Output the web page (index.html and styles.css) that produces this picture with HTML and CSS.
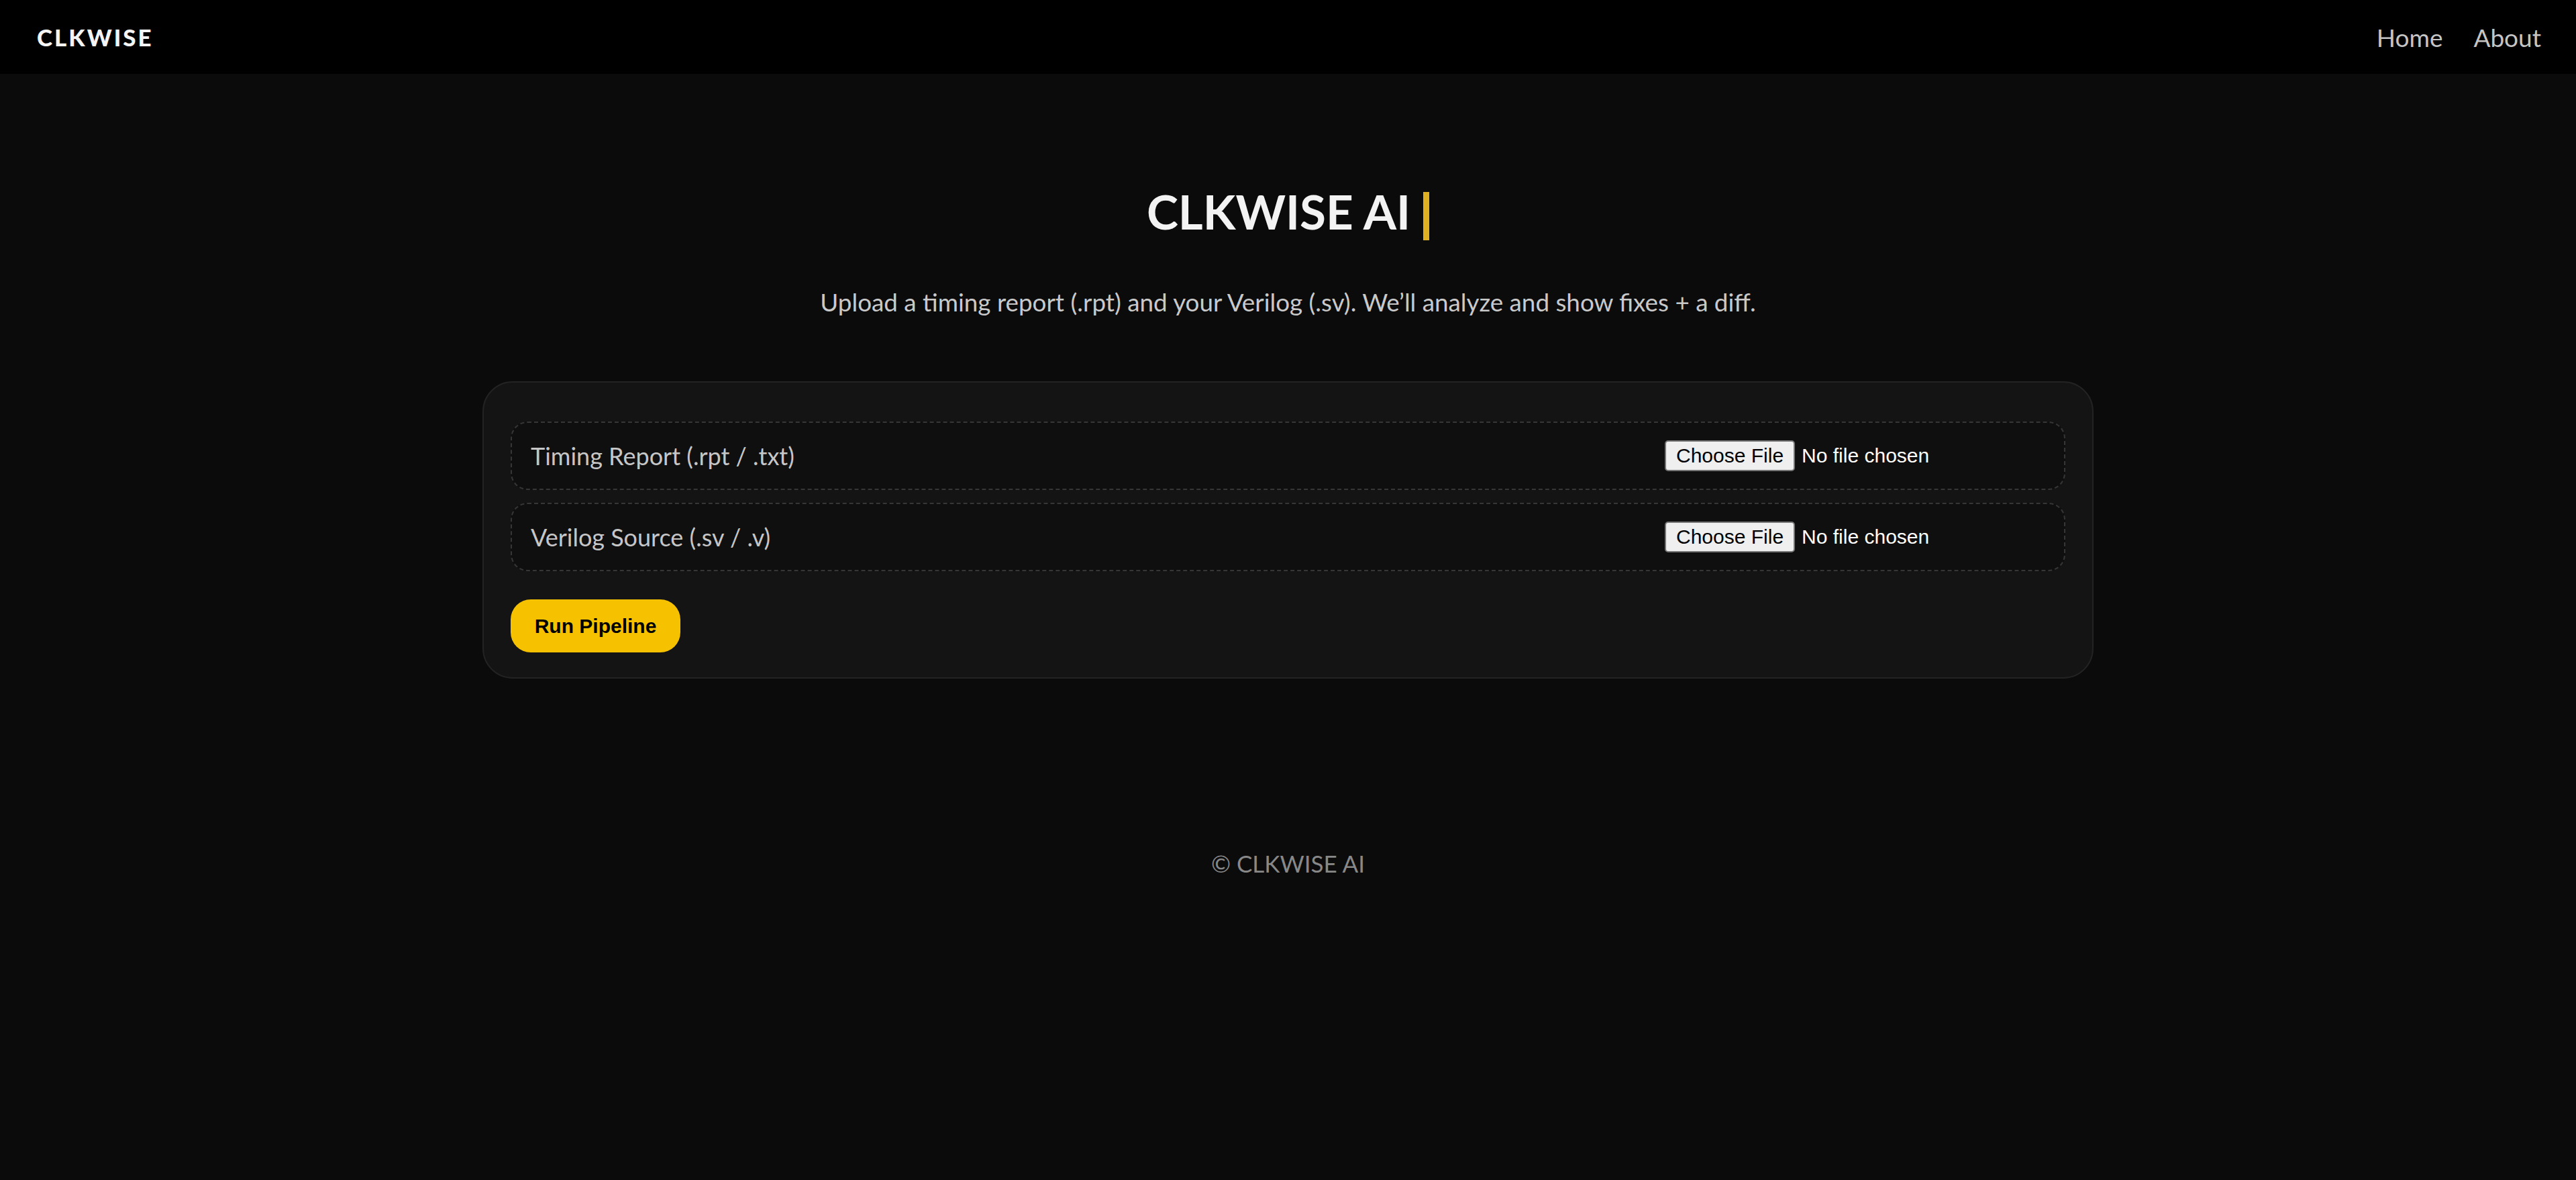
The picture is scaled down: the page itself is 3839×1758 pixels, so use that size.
FILE: index.html
```html
<!DOCTYPE html>
<html lang="en">

<head>
    <meta charset="UTF-8">
    <meta name="viewport" content="width=device-width, initial-scale=1.0">
    <title>CLKWISE AI</title>
    <link rel="stylesheet" href="styles.css">
</head>

<body>
    <nav class="topbar">
        <a href="#" class="brand">CLKWISE</a>
        <div class="nav-links">
            <a href="#">Home</a>
            <a href="#">About</a>
        </div>
    </nav>

    <main class="page">
        <h1 class="hero-title"><span class="typed">CLKWISE AI</span><span class="caret"></span></h1>
        <p class="hero-sub">Upload a timing report (.rpt) and your Verilog (.sv). We’ll analyze and show fixes + a diff.</p>

        <form class="card" action="" method="post">
            <div class="drop-row">
                <label for="report">Timing Report (.rpt / .txt)</label>
                <input type="file" id="report" name="report">
            </div>
            <div class="drop-row">
                <label for="verilog">Verilog Source (.sv / .v)</label>
                <input type="file" id="verilog" name="verilog">
            </div>
            <button type="submit" class="run-btn">Run Pipeline</button>
        </form>
    </main>

    <footer class="footer">© CLKWISE AI</footer>
</body>

</html>
```

FILE: styles.css
```css
body {
    margin: 0;
    background-color: #0b0b0b;
    font-family: Lato, "Open Sans", sans-serif;
    color: #f2f2f2;
}

a {
    text-decoration: none;
}

.topbar {
    height: 110px;
    background-color: #000;
    display: flex;
    justify-content: space-between;
    align-items: center;
    padding: 0 52px 0 55px;
}

.brand {
    color: #f4f4f4;
    font-size: 35px;
    font-weight: 900;
    letter-spacing: 3px;
}

.nav-links {
    display: flex;
    gap: 46px;
}

.nav-links a {
    color: #c4c4c4;
    font-size: 37px;
}

.page {
    text-align: center;
    padding-top: 155px;
}

.hero-title {
    margin: 0;
    font-size: 71px;
    font-weight: 700;
    line-height: 100px;
    color: #f3f3f3;
}

.caret {
    display: inline-block;
    width: 9px;
    height: 72px;
    margin-left: 19px;
    background-color: #dfb022;
    vertical-align: -16px;
}

.hero-sub {
    margin: 63px 0 0;
    font-size: 36.8px;
    color: #c9c9c9;
}

.card {
    width: 2317px;
    margin: 96px auto 0;
    padding: 58px 40px 37px;
    background-color: #141414;
    border: 2px solid #232323;
    border-radius: 45px;
    text-align: left;
}

.drop-row {
    height: 98px;
    display: flex;
    justify-content: space-between;
    align-items: center;
    padding: 0 28px;
    margin-bottom: 19px;
    background-color: #0f0f0f;
    border: 2px dashed #363636;
    border-radius: 25px;
}

.drop-row label {
    font-size: 36px;
    color: #c6c6c6;
}

.drop-row input[type="file"] {
    width: 567px;
    font-family: "Liberation Sans", Arial, sans-serif;
    font-size: 30px;
    color: #fff;
}

.drop-row input[type="file"]::file-selector-button {
    font: inherit;
    color: #000;
    height: 46px;
    padding: 0 15px;
    margin-right: 10px;
    background-color: #efefef;
    border: 2px solid #767676;
    border-radius: 5px;
}

.run-btn {
    margin-top: 23px;
    width: 253px;
    height: 79px;
    border: none;
    border-radius: 30px;
    background-color: #f6c200;
    color: #000;
    font-family: "Liberation Sans", Arial, sans-serif;
    font-size: 30px;
    font-weight: 700;
    cursor: pointer;
}

.footer {
    text-align: center;
    margin-top: 254px;
    font-size: 35px;
    color: #888;
}
```
